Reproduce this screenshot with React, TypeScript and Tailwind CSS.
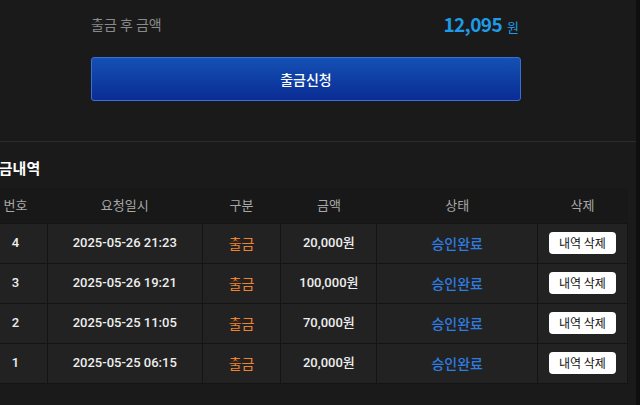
import React from "react";

const rows = [
  { no: "4", date: "2025-05-26 21:23", amt: "20,000원" },
  { no: "3", date: "2025-05-26 19:21", amt: "100,000원" },
  { no: "2", date: "2025-05-25 11:05", amt: "70,000원" },
  { no: "1", date: "2025-05-25 06:15", amt: "20,000원" },
];

const font = { fontFamily: 'Roboto, "Noto Sans CJK KR", sans-serif' };
const kr = { fontFamily: '"Noto Sans CJK KR", sans-serif' };

export default function App() {
  return (
    <div className="flex h-[405px] w-[640px] overflow-hidden bg-[#1a1a1a]" style={font}>
      <div className="flex min-w-0 flex-1 flex-col">
        <div className="ml-[91px] flex w-[430px] flex-col">
          <div className="flex h-[48px] items-center justify-between pr-[2px]">
            <span className="text-[14px] text-[#8a8a8a]" style={kr}>
              출금 후 금액
            </span>
            <span className="flex items-baseline gap-[5px] text-[#1f9ae6]" style={kr}>
              <span className="text-[19px] font-bold tracking-[-0.6px]">12,095</span>
              <span className="text-[13px]">원</span>
            </span>
          </div>
          <button className="mt-[9px] flex h-[44px] w-[430px] items-center justify-center rounded-[3px] border border-[#3a6fd6] bg-gradient-to-b from-[#1550b4] to-[#0b2c94] text-[14px] font-medium text-white" style={kr}>
            출금신청
          </button>
        </div>
        <div className="mt-[40px] h-[1px] bg-[#2c2c2c]" />
        <div className="ml-[-17px] flex flex-col">
          <div className="flex h-[46px] items-center pl-[2px] pt-[6px] text-[15px] font-bold text-white" style={kr}>
            출금내역
          </div>
          <table className="w-[645px] border-collapse text-[13px]">
            <colgroup>
              <col className="w-[64px]" />
              <col className="w-[155px]" />
              <col className="w-[79px]" />
              <col className="w-[96px]" />
              <col className="w-[161px]" />
              <col className="w-[90px]" />
            </colgroup>
            <thead>
              <tr className="h-[35px] bg-[#181818] text-[#a8a8a8]">
                {["번호", "요청일시", "구분", "금액", "상태", "삭제"].map((h) => (
                  <th key={h} className="pb-[2px] text-center text-[13px] font-normal" style={kr}>
                    {h}
                  </th>
                ))}
              </tr>
            </thead>
            <tbody>
              {rows.map((r) => (
                <tr key={r.no} className="h-[40px] bg-[#222222]">
                  <td className="border border-[#141414] text-center font-medium text-[#eeeeee]">{r.no}</td>
                  <td className="border border-[#141414] text-center font-medium text-[#eeeeee]">{r.date}</td>
                  <td className="border border-[#141414] text-center text-[14px] text-[#f0832f]" style={kr}>
                    출금
                  </td>
                  <td className="border border-[#141414] text-center font-medium text-[#eeeeee]">{r.amt}</td>
                  <td className="border border-[#141414] text-center text-[14px] font-medium text-[#2f7de0]" style={kr}>
                    승인완료
                  </td>
                  <td className="border border-[#141414] text-center">
                    <span className="inline-flex h-[22px] w-[67px] items-center justify-center rounded-[4px] bg-white text-[12px] text-[#111]" style={kr}>
                      내역 삭제
                    </span>
                  </td>
                </tr>
              ))}
            </tbody>
          </table>
        </div>
      </div>
      <div className="w-[4px] bg-[#0f0f0f]" />
    </div>
  );
}
